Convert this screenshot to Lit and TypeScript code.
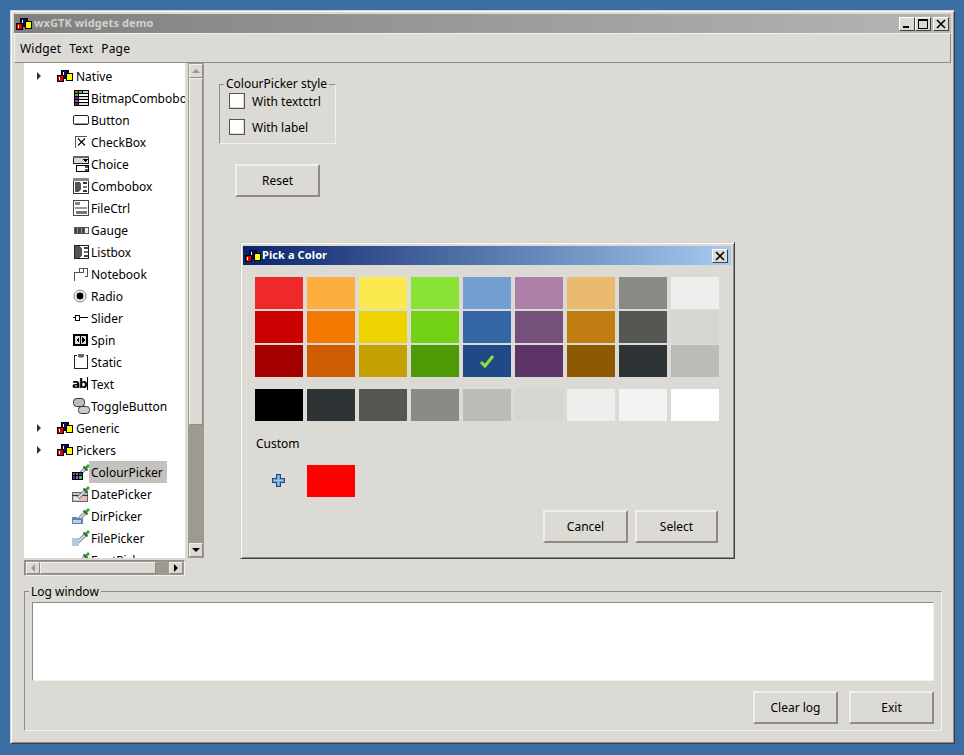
import { LitElement, css, html, svg } from "lit";
import { customElement } from "lit/decorators.js";
import { classMap } from "lit/directives/class-map.js";

const logo = svg`
  <rect x="4.5" y="0.5" width="7" height="8" fill="#0a0a6a" stroke="#000" />
  <rect x="6" y="2" width="1" height="4" fill="#fff" />
  <rect x="0.5" y="5.5" width="6" height="6" fill="#e00000" stroke="#000" />
  <rect x="2" y="7" width="1" height="3" fill="#fff" />
  <rect x="9.5" y="3.5" width="6" height="7" fill="#ffff00" stroke="#000" />
`;

const dropper = svg`
  <g shape-rendering="auto">
    <path d="M5 12 L12 5" stroke="#7f858c" stroke-width="3.4" />
    <path d="M5.5 11.5 L11.5 5.5" stroke="#f2f5f8" stroke-width="1.2" />
    <path d="M12 3 L15 0 L17 2 L14 5 Z" fill="#3aa53f" />
    <path d="M10.5 2.5 L14.5 6.5" stroke="#1c6f25" stroke-width="1.8" />
  </g>
`;

const treeIcons: Record<string, unknown> = {
  bitmap: svg`
    <rect x="1" y="0" width="15" height="16" fill="#000" />
    <rect x="2" y="1" width="3" height="2" fill="#e33" /><rect x="6" y="1" width="3" height="2" fill="#3c3" /><rect x="10" y="1" width="5" height="2" fill="#ccc" />
    <rect x="2" y="4" width="3" height="2" fill="#3c3" /><rect x="6" y="4" width="9" height="2" fill="#fff" />
    <rect x="2" y="7" width="3" height="2" fill="#33c" /><rect x="6" y="7" width="9" height="2" fill="#ddd" />
    <rect x="2" y="10" width="3" height="2" fill="#e33" /><rect x="6" y="10" width="9" height="2" fill="#fff" />
    <rect x="2" y="13" width="3" height="2" fill="#33c" /><rect x="6" y="13" width="9" height="2" fill="#ddd" />`,
  button: svg`
    <rect x="0.5" y="3.5" width="15" height="9" rx="1.5" fill="#fff" stroke="#222" shape-rendering="auto" />
    <rect x="2" y="11" width="13" height="1" fill="#999" />`,
  checkbox: svg`
    <path d="M2.5 14 V2.5 H14" fill="none" stroke="#555" />
    <path d="M5 4.5 L12 11.5 M12 4.5 L5 11.5" stroke="#000" fill="none" stroke-width="1.1" shape-rendering="auto" />`,
  choice: svg`
    <rect x="0.5" y="0.5" width="15" height="7" fill="#ddd" stroke="#222" />
    <rect x="0" y="0" width="16" height="2" fill="#666" />
    <path d="M9 3 h6 l-3 3 z" fill="#000" />
    <rect x="3.5" y="9.5" width="12" height="6" fill="#fff" stroke="#000" />
    <rect x="12" y="10" width="3" height="2" fill="#555" /><rect x="12" y="13" width="3" height="2" fill="#555" />`,
  combobox: svg`
    <rect x="0.5" y="0.5" width="15" height="15" fill="#fff" stroke="#333" />
    <rect x="0" y="0" width="16" height="3" fill="#888" />
    <path d="M2 4 h4 l2 2 v5 l-2 3 h-4 z" fill="#555" />
    <rect x="10" y="4" width="4" height="2" fill="#333" /><rect x="10" y="8" width="4" height="2" fill="#777" /><rect x="10" y="12" width="4" height="2" fill="#333" />`,
  filectrl: svg`
    <rect x="0.5" y="0.5" width="15" height="15" fill="#fff" stroke="#444" />
    <rect x="2" y="2" width="5" height="3" fill="#888" /><rect x="2" y="7" width="12" height="2" fill="#999" /><rect x="3" y="11" width="11" height="3" fill="#777" />`,
  gauge: svg`
    <rect x="1" y="5" width="15" height="7" fill="#555" />
    <rect x="2" y="6" width="9" height="5" fill="#444" />
    <rect x="4" y="6" width="1" height="5" fill="#999" /><rect x="8" y="6" width="1" height="5" fill="#999" />
    <rect x="12" y="6" width="3" height="5" fill="#eee" />`,
  listbox: svg`
    <rect x="1.5" y="1.5" width="14" height="13" fill="#fff" stroke="#222" />
    <path d="M2 2 h5 l2 3 v6 l-2 3 h-5 z" fill="#555" />
    <rect x="11" y="3" width="4" height="2" fill="#444" /><rect x="11" y="7" width="4" height="2" fill="#777" /><rect x="11" y="11" width="4" height="2" fill="#444" />`,
  notebook: svg`
    <path d="M1.5 15 V6.5 H6.5 V2.5 H14.5 V10 H12" fill="#fff" stroke="#555" />
    <path d="M10.5 2.5 V6.5 H6.5" fill="none" stroke="#555" />`,
  radio: svg`
    <circle cx="7" cy="8" r="6" fill="#eee" stroke="#888" shape-rendering="auto" />
    <circle cx="7" cy="8" r="3.4" fill="#000" shape-rendering="auto" />`,
  slider: svg`
    <rect x="7" y="7" width="8" height="1" fill="#000" /><rect x="0" y="7" width="2" height="1" fill="#000" />
    <path d="M2.5 5.5 h4 v5 h-4 z" fill="#fff" stroke="#000" />`,
  spin: svg`
    <rect x="0" y="2" width="15" height="12" fill="#000" />
    <rect x="2" y="4" width="5" height="8" fill="#ddd" /><rect x="8" y="4" width="5" height="8" fill="#ddd" />
    <path d="M6 5 v6 l-3 -3 z M9 5 v6 l3 -3 z" fill="#000" />`,
  static: svg`
    <path d="M3.5 1.5 H1.5 V15 M14.5 15 V1.5 H12.5" fill="none" stroke="#222" />
    <rect x="1" y="14" width="14" height="1" fill="#222" />
    <rect x="5" y="0" width="6" height="3" fill="#666" /><rect x="6" y="3" width="4" height="1" fill="#aaa" />`,
  text: svg`
    <text x="-1" y="12" font-family="DejaVu Sans" font-weight="700" font-size="12" letter-spacing="-1" fill="#000">ab</text>
    <rect x="14" y="1" width="1" height="13" fill="#000" />`,
  toggle: svg`
    <rect x="0.5" y="0.5" width="11" height="8" rx="3" fill="#bbb" stroke="#333" shape-rendering="auto" />
    <rect x="5.5" y="8.5" width="11" height="7" rx="3" fill="#ccc" stroke="#333" shape-rendering="auto" />`,
  colour: svg`
    ${dropper}
    <rect x="-1" y="8" width="11" height="8" fill="#000" />
    <rect x="0" y="9" width="2" height="2" fill="#e33" /><rect x="3" y="9" width="2" height="2" fill="#3a3" /><rect x="6" y="9" width="3" height="2" fill="#33e" />
    <rect x="0" y="12" width="2" height="3" fill="#33e" /><rect x="3" y="12" width="2" height="3" fill="#e3e" /><rect x="6" y="12" width="3" height="3" fill="#3c3" />`,
  date: svg`
    <rect x="-0.5" y="6.5" width="15" height="9" fill="#c4c4c4" stroke="#666" />
    <rect x="-1" y="9" width="16" height="1" fill="#333" />
    <rect x="1" y="11" width="5" height="3" fill="#eee" />
    <rect x="8" y="11" width="6" height="4" fill="#f0b8b8" />
    ${dropper}`,
  dir: svg`
    ${dropper}
    <path d="M-1 9 h4 l1 1 h6 v6 h-11 z" fill="#5f87ad" />
    <rect x="0" y="12" width="8" height="3" fill="#b8d0e8" />`,
  file: svg`
    ${dropper}
    <rect x="-1" y="8" width="7" height="8" fill="#a8cbe8" />`,
  font: svg`${dropper}`,
};

type TreeNode = { label: string; icon?: string; parent?: boolean; selected?: boolean };

const nodes: TreeNode[] = [
  { label: "Native", parent: true },
  { label: "BitmapCombobox", icon: "bitmap" },
  { label: "Button", icon: "button" },
  { label: "CheckBox", icon: "checkbox" },
  { label: "Choice", icon: "choice" },
  { label: "Combobox", icon: "combobox" },
  { label: "FileCtrl", icon: "filectrl" },
  { label: "Gauge", icon: "gauge" },
  { label: "Listbox", icon: "listbox" },
  { label: "Notebook", icon: "notebook" },
  { label: "Radio", icon: "radio" },
  { label: "Slider", icon: "slider" },
  { label: "Spin", icon: "spin" },
  { label: "Static", icon: "static" },
  { label: "Text", icon: "text" },
  { label: "ToggleButton", icon: "toggle" },
  { label: "Generic", parent: true },
  { label: "Pickers", parent: true },
  { label: "ColourPicker", icon: "colour", selected: true },
  { label: "DatePicker", icon: "date" },
  { label: "DirPicker", icon: "dir" },
  { label: "FilePicker", icon: "file" },
  { label: "FontPicker", icon: "font" },
];

const palette = [
  ["#ef2929", "#fcaf3e", "#fce94f", "#8ae234", "#729fcf", "#ad7fa8", "#e9b96e", "#888a85", "#eeeeec"],
  ["#cc0000", "#f57900", "#edd400", "#73d216", "#3465a4", "#75507b", "#c17d11", "#555753", "#d3d7cf"],
  ["#a40000", "#ce5c00", "#c4a000", "#4e9a06", "#204a87", "#5c3566", "#8f5902", "#2e3436", "#babdb6"],
];
const greys = ["#000000", "#2e3436", "#555753", "#888a85", "#babdb6", "#d3d7cf", "#eeeeec", "#f3f3f3", "#ffffff"];

@customElement("app-root")
export class AppRoot extends LitElement {
  static styles = css`
    :host {
      display: block;
      width: 964px;
      height: 755px;
      padding: 10px 0 0 10px;
      box-sizing: border-box;
      background: #3a6ea5;
      font-family: "Noto Sans", sans-serif;
      font-size: 12px;
      color: #000;
      overflow: hidden;
    }

    svg {
      display: block;
      flex: none;
      overflow: visible;
      shape-rendering: crispEdges;
    }

    .window {
      position: relative;
      box-sizing: border-box;
      width: 945px;
      height: 734px;
      padding: 3px;
      background: #dcdad5;
      border: 1px solid;
      border-color: #d4d0c8 #404040 #404040 #d4d0c8;
      box-shadow: inset 1px 1px 0 #fff, inset -1px -1px 0 #8f8b82;
    }

    .titlebar {
      display: flex;
      align-items: center;
      height: 19px;
      padding: 0 2px;
      background: linear-gradient(90deg, #808080, #b5b5b5);
      color: #d4d0c8;
      font-weight: 700;
      font-size: 11px;
      letter-spacing: 0.1px;
    }

    .titlebar span {
      flex: 1;
      margin-left: 2px;
      padding-bottom: 2px;
    }

    .wm-btn {
      box-sizing: border-box;
      width: 16px;
      height: 14px;
      display: flex;
      align-items: center;
      justify-content: center;
      background: #dcdad5;
      border: 1px solid;
      border-color: #fff #404040 #404040 #fff;
    }

    .wm-btn.last-of-group {
      margin-right: 2px;
    }

    .menubar {
      display: flex;
      gap: 8px;
      align-items: center;
      box-sizing: border-box;
      width: 937px;
      height: 30px;
      padding-left: 5px;
      letter-spacing: 0.2px;
      border: 1px solid;
      border-color: #f2f1ed #8f8b82 #8f8b82 #f2f1ed;
    }

    .main {
      display: flex;
      height: 513px;
      padding-left: 10px;
    }

    .left {
      display: flex;
      flex-direction: column;
      width: 180px;
    }

    .tree-row {
      display: flex;
      gap: 3px;
      height: 495px;
    }

    .tree {
      width: 161px;
      height: 495px;
      padding-top: 2px;
      box-sizing: border-box;
      background: #fff;
      overflow: hidden;
    }

    .node {
      display: flex;
      align-items: center;
      height: 22px;
      white-space: nowrap;
    }

    .node.parent {
      padding-left: 13px;
    }

    .node.child {
      padding-left: 49px;
    }

    .arrow {
      width: 0;
      height: 0;
      margin-right: 16px;
      border-left: 4px solid #333;
      border-top: 4px solid transparent;
      border-bottom: 4px solid transparent;
    }

    .node .label {
      margin-left: 1px;
      padding: 1px 4px 0 2px;
      line-height: 21px;
    }

    .node.child .label {
      margin-left: 0;
    }

    .node.selected .label {
      background: #c4c2bc;
    }

    .vscroll {
      display: flex;
      flex-direction: column;
      box-sizing: border-box;
      width: 16px;
      height: 495px;
      padding: 1px;
      background: #9d9a91;
    }

    .hscroll {
      display: flex;
      box-sizing: border-box;
      width: 161px;
      height: 16px;
      margin-top: 2px;
      padding: 1px;
      background: #9d9a91;
      border: 1px solid;
      border-color: #8f8b82 #f2f1ed #f2f1ed #8f8b82;
    }

    .sb-btn {
      display: flex;
      align-items: center;
      justify-content: center;
      flex: none;
      box-sizing: border-box;
      width: 14px;
      height: 14px;
      background: #dcdad5;
      border: 1px solid;
      border-color: #f2f1ed #8f8b82 #8f8b82 #f2f1ed;
    }

    .hscroll .sb-btn {
      height: 12px;
    }

    .thumb {
      box-sizing: border-box;
      background: #dcdad5;
      border: 1px solid;
      border-color: #f2f1ed #8f8b82 #8f8b82 #f2f1ed;
    }

    .vscroll .thumb {
      height: 347px;
    }

    .hscroll .thumb {
      width: 116px;
    }

    .fill {
      flex: 1;
    }

    .tri {
      width: 0;
      height: 0;
    }

    .tri.up {
      border: 4px solid transparent;
      border-top: 0;
      border-bottom: 4px solid #9d9a91;
    }

    .tri.down {
      border: 4px solid transparent;
      border-bottom: 0;
      border-top: 4px solid #000;
    }

    .tri.left {
      border: 4px solid transparent;
      border-left: 0;
      border-right: 4px solid #9d9a91;
    }

    .tri.right {
      border: 4px solid transparent;
      border-right: 0;
      border-left: 4px solid #000;
    }

    .content {
      flex: 1;
      padding: 14px 0 0 15px;
    }

    fieldset {
      margin: 0;
      box-sizing: border-box;
      border: 1px solid;
      border-color: #8f8b82 #f2f1ed #f2f1ed #8f8b82;
    }

    legend {
      padding: 0 2px;
      line-height: 14px;
      white-space: nowrap;
    }

    .style-group {
      width: 117px;
      height: 67px;
      padding: 0 0 0 9px;
    }

    .style-group legend {
      margin-left: -5px;
    }

    .check-row {
      display: flex;
      align-items: center;
      gap: 7px;
      height: 16px;
      margin-top: 2px;
      white-space: nowrap;
    }

    .check-row + .check-row {
      margin-top: 10px;
    }

    .check {
      box-sizing: border-box;
      width: 16px;
      height: 16px;
      background: #fff;
      border: 1px solid #555;
      box-shadow: inset -1px -1px 0 #dcdad5;
    }

    .btn {
      display: flex;
      align-items: center;
      justify-content: center;
      box-sizing: border-box;
      height: 33px;
      width: 85px;
      padding-bottom: 1px;
      background: #dcdad5;
      border: 2px solid;
      border-color: #f0efeb #8f8b82 #8f8b82 #f0efeb;
    }

    .reset {
      margin: 20px 0 0 16px;
    }

    .log-group {
      width: 918px;
      height: 147px;
      margin: 8px 0 0 10px;
      padding: 3px 7px 0 7px;
    }

    .log-group legend {
      margin-left: -3px;
      padding-top: 1px;
    }

    .log-text {
      box-sizing: border-box;
      width: 902px;
      height: 79px;
      background: #fff;
      border: 1px solid;
      border-color: #8f8b82 #f2f1ed #f2f1ed #8f8b82;
    }

    .log-actions {
      display: flex;
      justify-content: flex-end;
      gap: 11px;
      margin-top: 10px;
    }

    .dialog {
      position: absolute;
      left: 229px;
      top: 231px;
      box-sizing: border-box;
      width: 495px;
      height: 317px;
      padding: 3px 3px 3px 2px;
      background: #dcdad5;
      border: 1px solid;
      border-color: #d4d0c8 #404040 #404040 #d4d0c8;
      box-shadow: inset 1px 1px 0 #fff, inset -1px -1px 0 #8f8b82;
    }

    .dlg-title {
      display: flex;
      align-items: center;
      height: 19px;
      padding: 0 3px 0 2px;
      background: linear-gradient(90deg, #0a246a, #a6caf0);
      color: #fff;
      font-weight: 700;
      font-size: 11px;
      letter-spacing: 0.1px;
    }

    .dlg-title span {
      flex: 1;
      margin-left: 1px;
      padding-bottom: 2px;
    }

    .dlg-body {
      padding: 12px 0 0 12px;
    }

    .swatches {
      display: grid;
      grid-template-columns: repeat(9, 48px);
      grid-auto-rows: 32px;
      gap: 2px 4px;
    }

    .swatches.greys {
      margin-top: 12px;
    }

    .swatch {
      display: flex;
      align-items: center;
      justify-content: center;
    }

    .custom-label {
      margin: 15px 0 0 1px;
      line-height: 16px;
    }

    .custom-row {
      display: flex;
      align-items: center;
      gap: 20px;
      margin: 13px 0 0 16px;
    }

    .custom-swatch {
      width: 48px;
      height: 32px;
      background: #ff0000;
    }

    .dlg-actions {
      display: flex;
      justify-content: flex-end;
      gap: 7px;
      margin: 13px 0 0 0;
      padding-right: 13px;
    }

    .dlg-actions .select {
      width: 83px;
    }
  `;

  private renderNode(node: TreeNode) {
    const classes = { node: true, parent: !!node.parent, child: !node.parent, selected: !!node.selected };
    return html`<div class=${classMap(classes)}>
      ${node.parent ? html`<div class="arrow"></div>` : ""}
      ${node.parent
        ? html`<svg width="16" height="12" viewBox="0 0 16 12">${logo}</svg>`
        : html`<svg width="16" height="16" viewBox="0 0 16 16">${treeIcons[node.icon!]}</svg>`}
      <span class="label">${node.label}</span>
    </div>`;
  }

  render() {
    return html`
      <div class="window">
        <div class="titlebar">
          <svg width="16" height="12" viewBox="0 0 16 12">${logo}</svg>
          <span>wxGTK widgets demo</span>
          <div class="wm-btn">
            <svg width="10" height="10" viewBox="0 0 10 10"><rect x="1" y="7" width="6" height="2" fill="#000" /></svg>
          </div>
          <div class="wm-btn last-of-group">
            <svg width="12" height="10" viewBox="0 0 12 10"><rect x="1.5" y="0.5" width="9" height="9" fill="none" stroke="#000" /><rect x="1" y="1" width="10" height="1" fill="#000" /></svg>
          </div>
          <div class="wm-btn">
            <svg width="10" height="10" viewBox="0 0 10 10"><path d="M1 1 L9 9 M9 1 L1 9" stroke="#000" stroke-width="1.6" shape-rendering="auto" /></svg>
          </div>
        </div>
        <div class="menubar"><span>Widget</span><span>Text</span><span>Page</span></div>
        <div class="main">
          <div class="left">
            <div class="tree-row">
              <div class="tree">${nodes.map((n) => this.renderNode(n))}</div>
              <div class="vscroll">
                <div class="sb-btn"><div class="tri up"></div></div>
                <div class="thumb"></div>
                <div class="fill"></div>
                <div class="sb-btn"><div class="tri down"></div></div>
              </div>
            </div>
            <div class="hscroll">
              <div class="sb-btn"><div class="tri left"></div></div>
              <div class="thumb"></div>
              <div class="fill"></div>
              <div class="sb-btn"><div class="tri right"></div></div>
            </div>
          </div>
          <div class="content">
            <fieldset class="style-group">
              <legend>ColourPicker style</legend>
              <div class="check-row"><div class="check"></div><span>With textctrl</span></div>
              <div class="check-row"><div class="check"></div><span>With label</span></div>
            </fieldset>
            <div class="btn reset">Reset</div>
          </div>
        </div>
        <fieldset class="log-group">
          <legend>Log window</legend>
          <div class="log-text"></div>
          <div class="log-actions">
            <div class="btn">Clear log</div>
            <div class="btn">Exit</div>
          </div>
        </fieldset>

        <div class="dialog">
          <div class="dlg-title">
            <svg width="16" height="12" viewBox="0 0 16 12">${logo}</svg>
            <span>Pick a Color</span>
            <div class="wm-btn">
              <svg width="10" height="10" viewBox="0 0 10 10"><path d="M1 1 L9 9 M9 1 L1 9" stroke="#000" stroke-width="1.6" shape-rendering="auto" /></svg>
            </div>
          </div>
          <div class="dlg-body">
            <div class="swatches">
              ${palette.flat().map(
                (c, i) =>
                  html`<div class="swatch" style="background:${c}">
                    ${i === 22
                      ? html`<svg width="16" height="14" viewBox="0 0 16 14" style="shape-rendering:auto"><path d="M2 8 L6 12 L14 2" fill="none" stroke="#8ae234" stroke-width="3" /></svg>`
                      : ""}
                  </div>`,
              )}
            </div>
            <div class="swatches greys">
              ${greys.map((c) => html`<div class="swatch" style="background:${c}"></div>`)}
            </div>
            <div class="custom-label">Custom</div>
            <div class="custom-row">
              <svg width="16" height="16" viewBox="0 0 16 16">
                <path d="M5.5 1.5 h4 v4 h4 v4 h-4 v4 h-4 v-4 h-4 v-4 h4 z" fill="#729fcf" stroke="#204a87" />
                <path d="M7 3 h1 v4 h4 v1 h-4 v4 h-1 v-4 h-4 v-1 h4 z" fill="#a9c8e8" />
              </svg>
              <div class="custom-swatch"></div>
            </div>
            <div class="dlg-actions">
              <div class="btn">Cancel</div>
              <div class="btn select">Select</div>
            </div>
          </div>
        </div>
      </div>
    `;
  }
}
